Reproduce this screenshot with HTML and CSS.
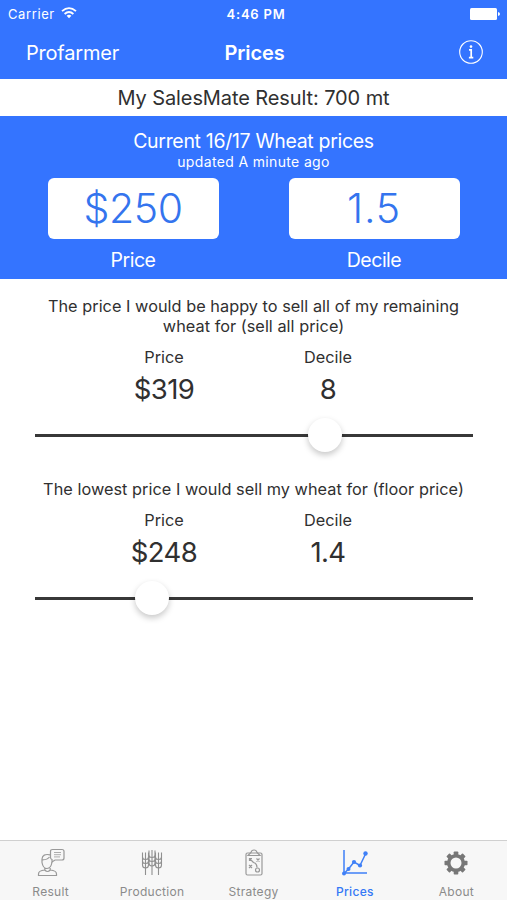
FILE: index.html
```html
<!DOCTYPE html>
<html lang="en">
<head>
<meta charset="utf-8">
<title>Prices</title>
<link rel="stylesheet" href="styles.css">
</head>
<body>
<div class="app">
  <header class="top">
    <div class="status">
      <div class="carrier"><span>Carrier</span>
        <svg class="wifi" width="16" height="12" viewBox="0 0 16 12" fill="none" stroke="#fff" stroke-width="1.8"><path d="M1 4.2Q8-2 15 4.2M3.6 7Q8 3 12.4 7"/><path d="M8 11.3L5.6 8.8Q8 6.9 10.4 8.8Z" fill="#fff" stroke="none"/></svg>
      </div>
      <span class="time">4:46 PM</span>
      <svg class="battery" width="30" height="12" viewBox="0 0 30 12" fill="#fff"><rect width="27" height="12" rx="1.5"/><path d="M28 4q2 .5 2 2t-2 2z"/></svg>
    </div>
    <nav class="nav">
      <span class="back">Profarmer</span>
      <h1>Prices</h1>
      <svg class="info" width="24" height="24" viewBox="0 0 24 24" fill="none" stroke="#fff"><circle cx="12" cy="12" r="11.3" stroke-width="1.1"/><path d="M10 9.8h2.2v7.800M9.900 17.600h4.400" stroke-width="1.700"/><circle cx="12" cy="6.600" r="1.300" fill="#fff" stroke="none"/></svg>
    </nav>
  </header>
  <div class="result"><span>My SalesMate Result: 700 mt</span></div>
  <section class="current">
    <h2>Current 16/17 Wheat prices</h2>
    <p class="updated">updated A minute ago</p>
    <div class="cards">
      <div class="card"><div class="box">$250</div><div class="caption">Price</div></div>
      <div class="card"><div class="box decile">1.5</div><div class="caption">Decile</div></div>
    </div>
  </section>
  <main class="targets">
    <section class="target">
      <p class="question">The price I would be happy to sell all of my remaining<br>wheat for (sell all price)</p>
      <div class="values">
        <div class="value"><span class="label">Price</span><span class="num">$319</span></div>
        <div class="value"><span class="label">Decile</span><span class="num">8</span></div>
      </div>
      <div class="slider"><div class="spacer" style="width:273px"></div><div class="thumb"></div></div>
    </section>
    <section class="target">
      <p class="question">The lowest price I would sell my wheat for (floor price)</p>
      <div class="values">
        <div class="value"><span class="label">Price</span><span class="num">$248</span></div>
        <div class="value"><span class="label">Decile</span><span class="num">1.4</span></div>
      </div>
      <div class="slider"><div class="spacer" style="width:99.5px"></div><div class="thumb"></div></div>
    </section>
  </main>
  <nav class="tabs">
    <div class="tab">
      <svg width="30" height="30" viewBox="0 0 30 30" fill="none" stroke="#999" stroke-width="1.2"><path d="M14.500 3.500q0-2 2-2h9.500q2 0 2 2v6.500q0 2-2 2h-7l-3 2v-2.500q-1.500-.5-1.500-2z"/><path d="M18 4.500h7M18 6.700h7M18 8.900h6" stroke-width=".8"/><path d="M14 6.800q-7.500-1.500-8 4.200v3.500q1 6 5 6t5-6.500M6.500 11.800q5 0 7-2.800M8.800 20v2q-6.300.5-6.300 4v1.500h18V26q0-3.500-6.300-4v-2M8.800 22q2.700 3 5.400 0"/></svg>
      <span>Result</span>
    </div>
    <div class="tab">
      <svg width="30" height="30" viewBox="0 0 30 30" fill="none" stroke="#909090" stroke-width="1.1"><path d="M8.500 4.500V27M15 2v25M21.500 4.500V27"/><g id="ear"><path d="M5.500 4.500V9q0 2.500 3 2.500t3-2.500V4.500M5.500 9v4q0 2.500 3 2.500t3-2.500V9M5.500 13v4q0 3 3 3t3-3v-4"/></g><use href="#ear" x="13"/><use href="#ear" x="6.500" y="-2"/></svg>
      <span>Production</span>
    </div>
    <div class="tab">
      <svg width="30" height="30" viewBox="0 0 30 30" fill="none" stroke="#999" stroke-width="1.2"><rect x="7" y="5" width="16" height="22" rx="1.500"/><path d="M9 7.500L12 4.500Q12.500 2 15 2t3 2.500l3 3zM10.500 10.500l4 4M10.500 13v-2.500H13M17.500 10.500l3 3M20.500 10.500l-3 3M10 17l3 3M13 17l-3 3M14.500 14.500q3.500 1 3.500 5"/><circle cx="18.500" cy="22" r="2"/></svg>
      <span>Strategy</span>
    </div>
    <div class="tab active">
      <svg width="30" height="30" viewBox="0 0 30 30" fill="none" stroke="#3f80f7" stroke-width="1.500"><path d="M4 2v23h23M4.500 25l4-4L14 14l6 3.500L25.500 6"/><g fill="#3f80f7" stroke="none"><circle cx="4" cy="25.500" r="2"/><circle cx="8.500" cy="21" r="2"/><circle cx="14" cy="14" r="2.100"/><circle cx="20" cy="17.500" r="2.100"/><circle cx="25.500" cy="5.500" r="2.200"/></g></svg>
      <span>Prices</span>
    </div>
    <div class="tab">
      <svg width="30" height="30" viewBox="0 0 30 30" fill="none" stroke="#777"><circle cx="15" cy="15" r="7.300" stroke-width="3.600"/><g fill="#777" stroke="none"><rect id="tooth" x="12.700" y="3.500" width="4.600" height="4" rx=".8"/><use href="#tooth" transform="rotate(45 15 15)"/><use href="#tooth" transform="rotate(90 15 15)"/><use href="#tooth" transform="rotate(135 15 15)"/><use href="#tooth" transform="rotate(180 15 15)"/><use href="#tooth" transform="rotate(225 15 15)"/><use href="#tooth" transform="rotate(270 15 15)"/><use href="#tooth" transform="rotate(315 15 15)"/></g></svg>
      <span>About</span>
    </div>
  </nav>
</div>
</body>
</html>
```
FILE: styles.css
```css
* { box-sizing: border-box; }
body { margin: 0; font-family: Inter, sans-serif; color: #303030; background: #fff; }
h1, h2, p { margin: 0; font-weight: 400; }
.app { display: flex; flex-direction: column; height: 900px; width: 507px; }
.top { background: #3474ff; color: #fff; height: 79px; }
.status { display: grid; grid-template-columns: 1fr auto 1fr; align-items: center; height: 27px; padding: 0 7px 0 8px; font-size: 13px; }
.carrier { display: flex; align-items: center; gap: 6px; letter-spacing: .6px; }
.wifi { margin-top: -2px; }
.time { font-weight: 600; letter-spacing: .8px; padding-left: 4px; }
.battery { justify-self: end; }
.nav { display: grid; grid-template-columns: 1fr auto 1fr; align-items: center; height: 50px; padding: 0 24px 0 26px; }
.back { font-size: 20px; letter-spacing: -.2px; padding-top: 1px; }
.nav h1 { font-size: 20px; font-weight: 600; padding-top: 1px; letter-spacing: -.1px; }
.info { justify-self: end; }
.result { height: 37px; line-height: 38px; text-align: center; font-size: 20px; letter-spacing: -.1px; }
.current { background: #3474ff; color: #fff; height: 163px; padding-top: 13px; text-align: center; }
.current h2 { font-size: 19.500px; line-height: 24px; letter-spacing: -.32px; }
.updated { font-size: 14px; line-height: 17px; letter-spacing: .35px; }
.cards { display: flex; justify-content: center; gap: 70px; margin-top: 8px; }
.card { width: 171px; }
.box { height: 61px; border-radius: 6px; background: #fff; color: #3474ee; font-size: 41px; font-weight: 300; line-height: 61px; letter-spacing: -.4px; }
.decile { letter-spacing: .9px; }
.caption { font-size: 19.500px; line-height: 24px; margin-top: 9px; letter-spacing: -.5px; }
.targets { flex: 1; padding-top: 17px; }
.target { height: 183px; text-align: center; }
.target + .target { height: 163px; }
.question { font-size: 16.300px; line-height: 20px; letter-spacing: .03px; white-space: nowrap; }
.values { display: flex; justify-content: center; margin: 11px 15px 0 0; }
.value { display: flex; flex-direction: column; width: 164px; }
.label { font-size: 16.300px; line-height: 20px; }
.num { font-size: 27.500px; line-height: 32px; margin-top: 6px; letter-spacing: -.6px; }
.slider { display: flex; align-items: center; height: 34px; margin: 13px 34px 0 35px; background: linear-gradient(#383838, #383838) center / 100% 3px no-repeat; }
.thumb { width: 34px; height: 34px; flex: none; border-radius: 50%; background: #fff; box-shadow: 0 3px 6px rgba(0,0,0,.22); }
.tabs { height: 60px; display: flex; background: #f7f7f7; border-top: 1px solid #d0d0d0; color: #8b8b8b; }
.tab { flex: 1; display: flex; flex-direction: column; align-items: center; padding-top: 7px; font-size: 12px; letter-spacing: .3px; }
.tab span { line-height: 15px; margin-top: 6px; }
.active { color: #3478f6; font-weight: 500; }
```
